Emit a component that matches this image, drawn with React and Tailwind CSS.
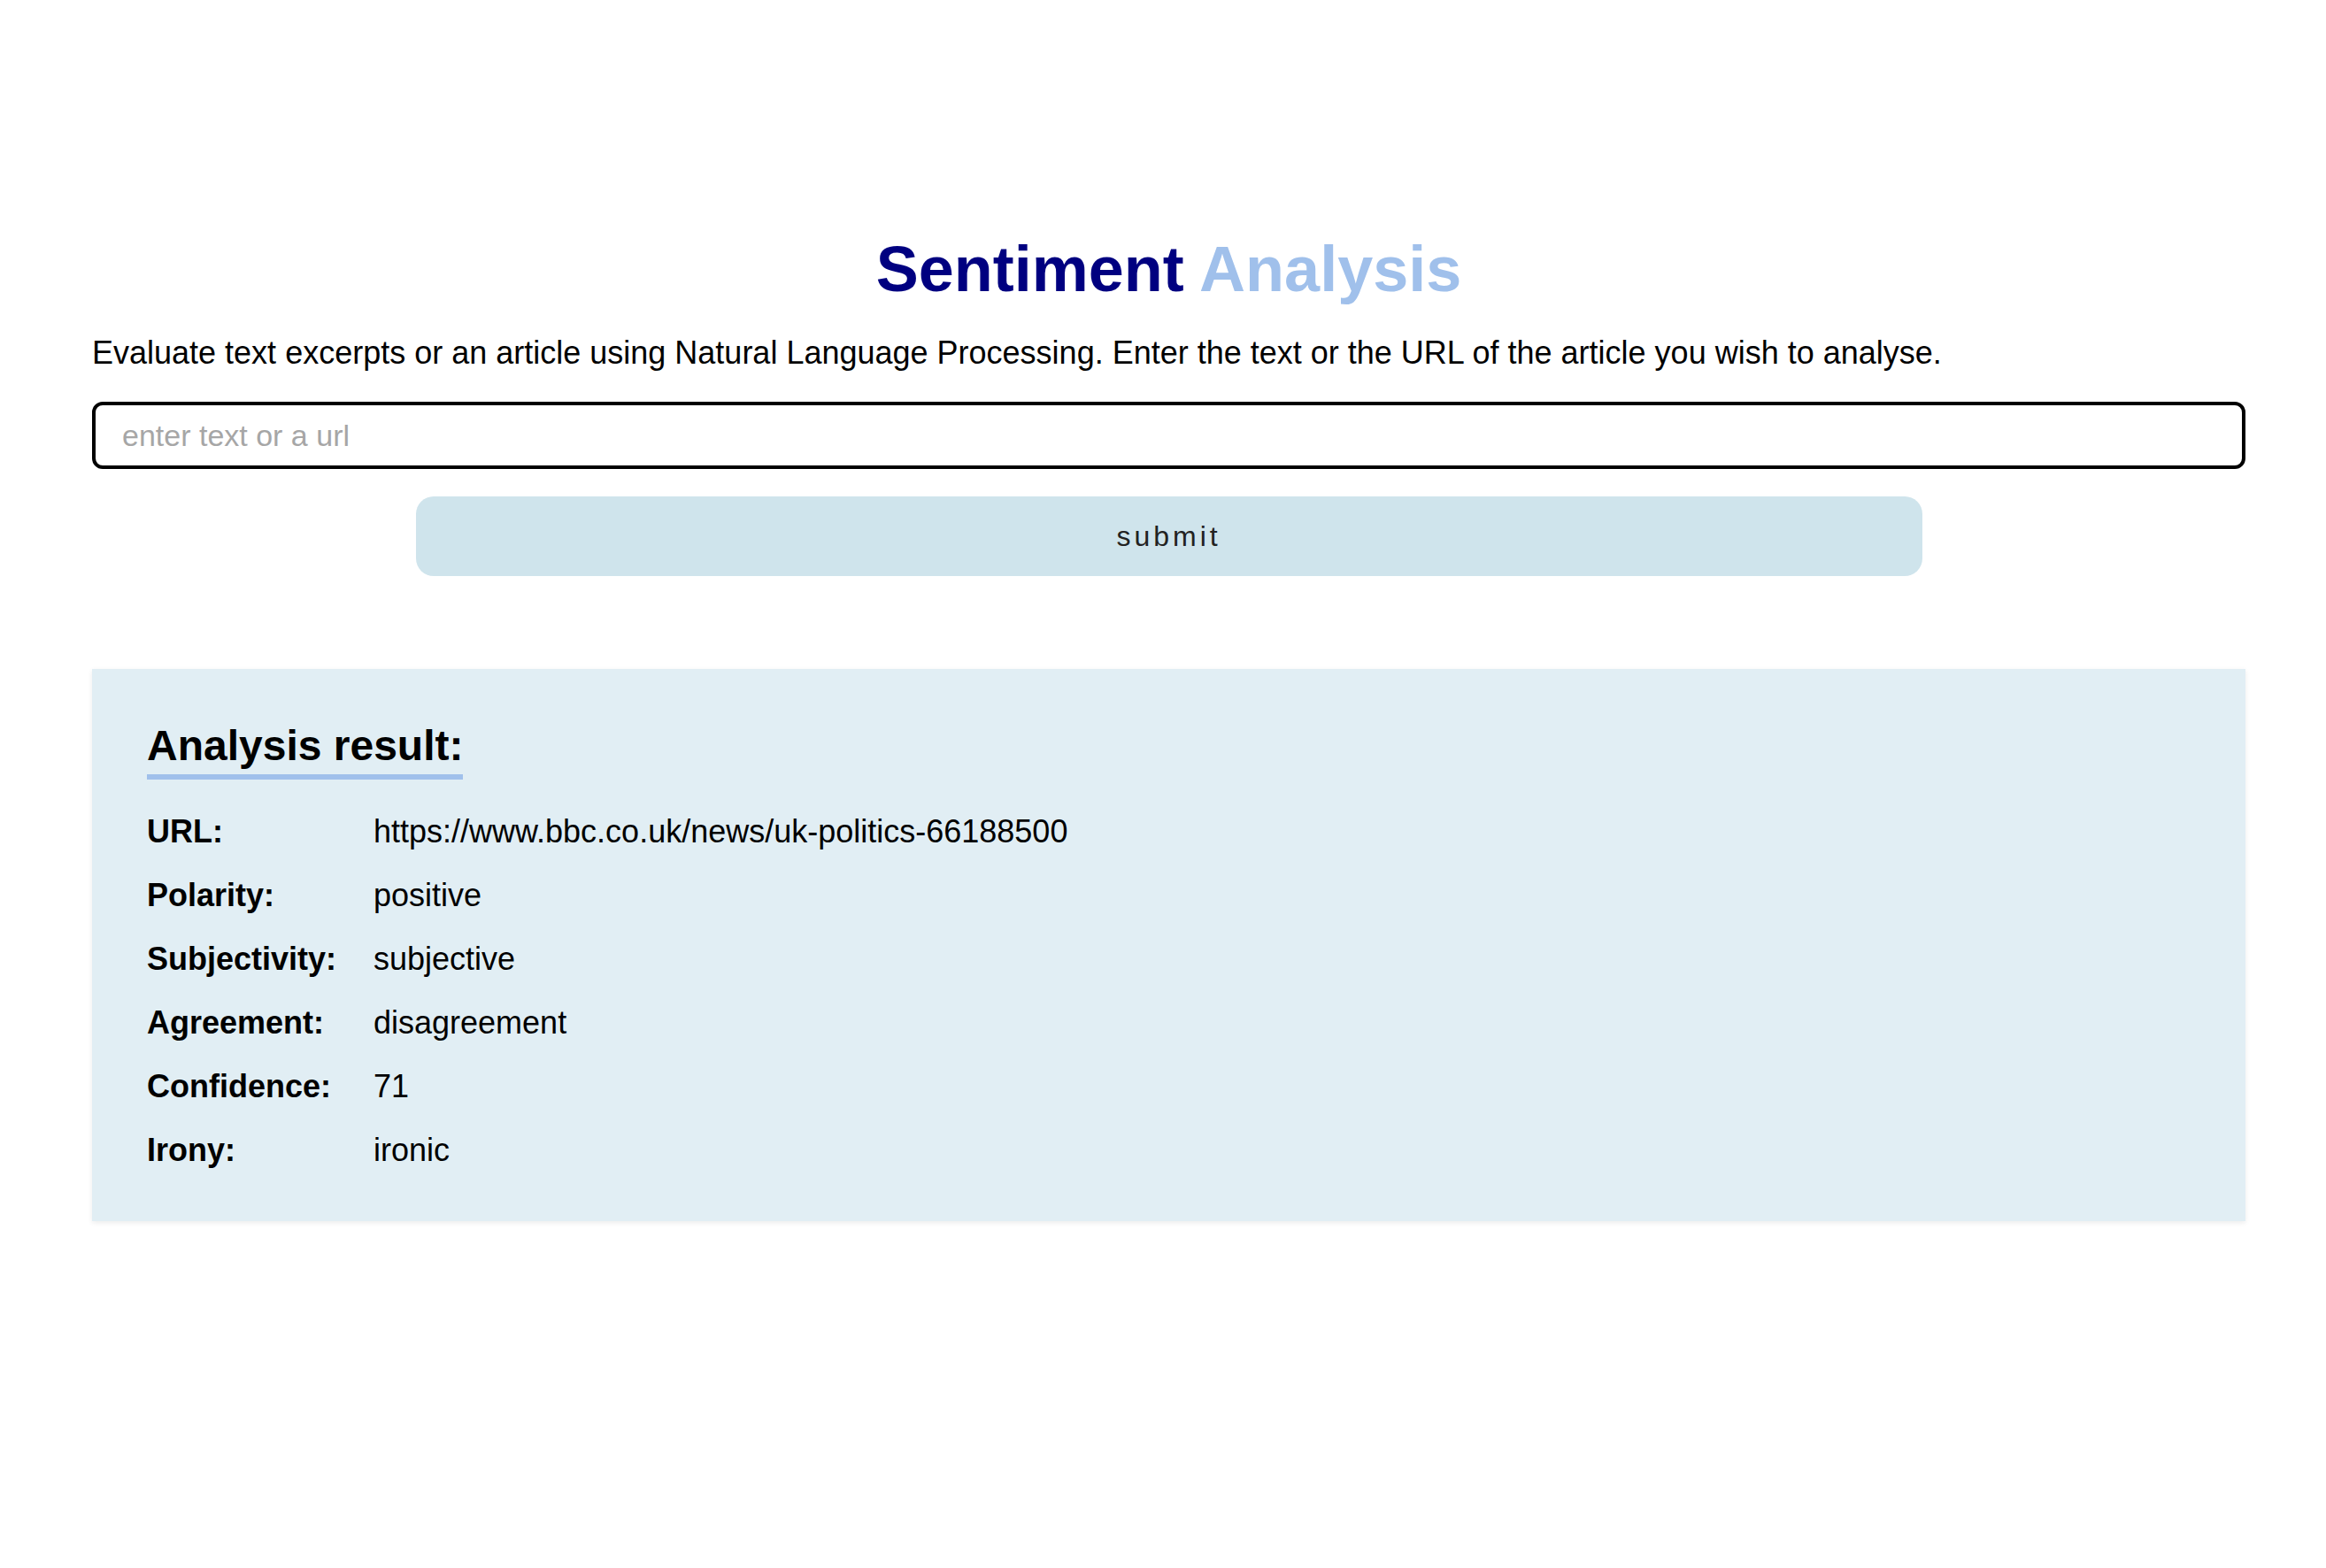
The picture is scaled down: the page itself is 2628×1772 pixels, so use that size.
import React from 'react';

// ── Result rows ──────────────────────────────────────────────────────────────

const RESULTS = [
  { label: 'URL:', value: 'https://www.bbc.co.uk/news/uk-politics-66188500' },
  { label: 'Polarity:', value: 'positive' },
  { label: 'Subjectivity:', value: 'subjective' },
  { label: 'Agreement:', value: 'disagreement' },
  { label: 'Confidence:', value: '71' },
  { label: 'Irony:', value: 'ironic' },
];

function ResultRow({ label, value }) {
  return (
    <div className="flex h-[72px] items-center text-[36px] leading-[72px] text-black">
      <span className="w-[256px] shrink-0 font-bold">{label}</span>
      <span>{value}</span>
    </div>
  );
}

// ── Main component ───────────────────────────────────────────────────────────

export default function App() {
  return (
    <div className="min-h-screen w-full bg-white font-['Liberation_Sans',Arial,sans-serif]">
      <div className="w-[2433px] ml-[104px] pt-[264px]">

        {/* ── Header ── */}
        <h1 className="text-center text-[72px] leading-[80px] font-bold">
          <span className="text-[#000080]">Sentiment</span>{' '}
          <span className="text-[#a0c0eb]">Analysis</span>
        </h1>
        <p className="mt-[33px] text-[36px] leading-[44px] text-black">
          Evaluate text excerpts or an article using Natural Language Processing. Enter the text or the URL of the article you wish to analyse.
        </p>

        {/* ── Form ── */}
        <form className="mt-[33px] flex flex-col items-center" onSubmit={(e) => e.preventDefault()}>
          <input
            type="text"
            placeholder="enter text or a url"
            className="w-full h-[76px] rounded-[12px] border-[4px] border-black px-[30px] text-[34px] text-black placeholder:text-[#a6a6a6] outline-none"
          />
          <button
            type="submit"
            className="mt-[31px] w-[1702px] h-[90px] rounded-[20px] bg-[#cfe4ec] text-[32px] tracking-[4px] text-[#222222]"
          >
            submit
          </button>
        </form>

        {/* ── Result ── */}
        <section className="mt-[105px] bg-[#e1eef4] shadow-[0_2px_6px_rgba(0,0,0,0.08)] pl-[62px] pt-[63px] pb-[44px]">
          <h2 className="inline-block text-[48px] leading-[48px] font-bold text-black pb-[8px] border-b-[6px] border-[#a0c0eb]">
            Analysis result:
          </h2>
          <div className="mt-[23px]">
            {RESULTS.map((r) => (
              <ResultRow key={r.label} label={r.label} value={r.value} />
            ))}
          </div>
        </section>

      </div>
    </div>
  );
}
